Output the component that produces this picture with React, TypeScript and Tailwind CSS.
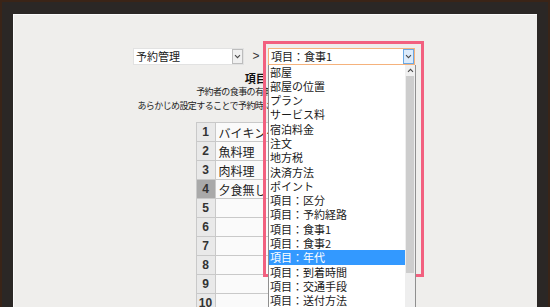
import type { ReactNode } from 'react';

const OPTIONS = [
  '部屋',
  '部屋の位置',
  'プラン',
  'サービス料',
  '宿泊料金',
  '注文',
  '地方税',
  '決済方法',
  'ポイント',
  '項目：区分',
  '項目：予約経路',
  '項目：食事1',
  '項目：食事2',
  '項目：年代',
  '項目：到着時間',
  '項目：交通手段',
  '項目：送付方法',
  '項目：部屋タイプ',
];

const SELECTED_OPTION = '項目：年代';

const ROWS = ['バイキング', '魚料理', '肉料理', '夕食無し', '', '', '', '', '', ''];

const JP = "font-['Noto_Sans_CJK_JP',sans-serif]";

function Chevron({ up = false }: { up?: boolean }) {
  return (
    <svg width="7" height="5" viewBox="0 0 7 5" className={up ? 'rotate-180' : ''}>
      <path d="M1 1.2 L3.5 3.7 L6 1.2" fill="none" stroke="#4a4a4a" strokeWidth="1.1" />
    </svg>
  );
}

function SelectBox({ width, className, button, children }: { width: string; className: string; button: string; children: ReactNode }) {
  return (
    <div className={`flex h-[17px] items-stretch bg-white ${width} ${className}`}>
      <div className={`flex-1 truncate pl-[2px] text-[11px] leading-[15px] text-[#1a1a1a] ${JP}`}>{children}</div>
      <div className={`flex w-[11px] items-center justify-center border ${button}`}>
        <Chevron />
      </div>
    </div>
  );
}

function OptionList() {
  return (
    <div className="absolute left-0 top-[17px] z-10 flex h-[250px] w-[148px] border-x border-[#8f8f8f] bg-white">
      <div className="flex-1">
        {OPTIONS.map((option) => (
          <div
            key={option}
            className={`h-[14.3px] pl-[1px] text-[11px] leading-[14px] ${JP} ${
              option === SELECTED_OPTION ? 'bg-[#3399ff] text-white' : 'text-[#1a1a1a]'
            }`}
          >
            {option}
          </div>
        ))}
      </div>
      <div className="flex w-[10px] flex-col bg-[#eeeeee]">
        <div className="flex h-[11px] items-center justify-center bg-[#f0f0f0]">
          <Chevron up />
        </div>
        <div className="ml-[1px] h-[197px] w-[8px] bg-[#cdcdcd]" />
      </div>
    </div>
  );
}

export default function App() {
  return (
    <div className="h-[307px] w-[550px] overflow-hidden bg-[#3a2417] p-[2px]">
      <div className="h-[320px] bg-[#2b2725] px-[11px] pt-[12px]">
        <div className="h-[300px] border-l border-t border-[#fbfbfb] bg-[#efeeec]">
          <div className="mt-[32px] flex items-center pl-[119px]">
            <SelectBox width="w-[111px]" className="border border-[#e2e2e2]" button="border-[#bdbdbd] bg-[#f0f0f0]">
              予約管理
            </SelectBox>
            <span className="w-[24px] text-center font-['Liberation_Sans',sans-serif] text-[12px] text-[#333]">&gt;</span>
            <div className="relative">
              <div className="pointer-events-none absolute left-[-5px] top-[-7px] h-[236px] w-[161px] border-[3px] border-[#f2607f]" />
              <SelectBox width="w-[147px]" className="border border-[#f5b27c]" button="border-[#6aa8e4] bg-[#dcebfb]">
                項目：食事1
              </SelectBox>
              <OptionList />
            </div>
          </div>

          <div className={`mt-[6px] text-center ${JP}`}>
            <div className="text-[11px] font-bold leading-[14px] text-[#111]">項目：食事1</div>
            <div className="text-[9px] leading-[14px] tracking-[-0.6px] text-[#222]">予約者の食事の有無や内容を設定します。</div>
            <div className="text-[9px] leading-[14px] tracking-[-0.6px] text-[#222]">
              あらかじめ設定することで予約時に入力する手間を省くことができます。
            </div>
          </div>

          <table className="mx-auto mt-[9px] w-[160px] border-collapse">
            <tbody>
              {ROWS.map((label, i) => (
                <tr key={i} className="h-[19px]">
                  <td
                    className={`w-[19px] border border-[#c9c9c9] text-center font-['Liberation_Sans',sans-serif] text-[12px] font-bold text-[#333] ${
                      i === 3 ? 'bg-[#a9a9a9]' : 'bg-[#e9e9e9]'
                    }`}
                  >
                    {i + 1}
                  </td>
                  <td className={`border border-[#c9c9c9] bg-[#fafafa] pl-[3px] text-[12px] leading-[17px] text-[#222] ${JP}`}>{label}</td>
                </tr>
              ))}
            </tbody>
          </table>
        </div>
      </div>
    </div>
  );
}
